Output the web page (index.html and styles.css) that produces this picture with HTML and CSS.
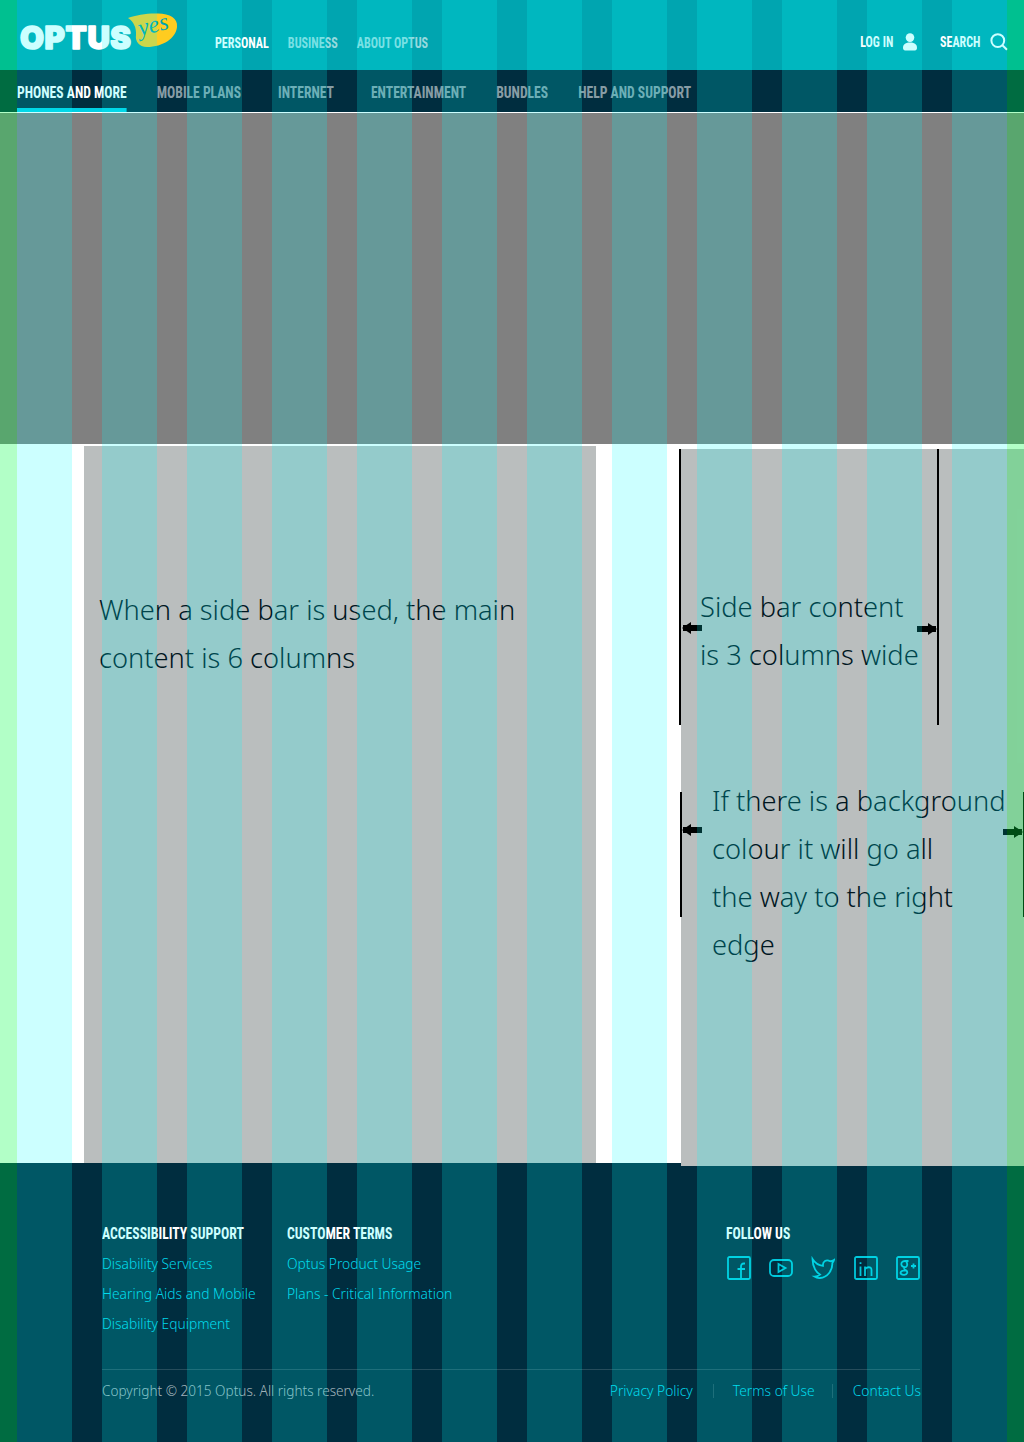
FILE: index.html
```html
<!DOCTYPE html>
<html lang="en">
<head>
  <meta charset="UTF-8">
  <meta name="viewport" content="width=device-width, initial-scale=1.0">
  <title>Optus - two column template</title>
  <link rel="stylesheet" href="styles.css">
</head>
<body>
  <header class="topbar">
    <svg class="logo" width="165" height="44" viewBox="0 0 165 44">
      <path class="logo-bubble" d="M110 8 C118 5 130 3 140 3.5 C152 4 160 8 159 17 C158 28 145 37 129 37 C121 37 117 31 118 25 C118.5 18 116 12 110 8 Z"/>
      <text class="logo-word" x="2" y="39" textLength="111" lengthAdjust="spacing">OPTUS</text>
      <text class="logo-yes" x="122" y="26" transform="rotate(-14 122 26)">yes</text>
    </svg>
    <nav class="segments">
      <a class="segment segment-active" href="#">Personal</a>
      <a class="segment" href="#">Business</a>
      <a class="segment" href="#">About Optus</a>
    </nav>
    <div class="tools">
      <a class="tool tool-login" href="#"><span class="tool-label">Log in</span>
        <svg width="16" height="18" viewBox="0 0 16 18"><circle cx="8" cy="4.6" r="4.3"/><path d="M1 15 C1 11 4 9.6 8 9.6 C12 9.6 15 11 15 15 C15 17 13.5 17.5 12 17.5 L4 17.5 C2.5 17.5 1 17 1 15 Z"/></svg>
      </a>
      <a class="tool" href="#"><span class="tool-label">Search</span>
        <svg width="18" height="18" viewBox="0 0 18 18"><circle class="tool-line" cx="7.8" cy="7.6" r="6.4"/><path class="tool-line" d="M12.4 12.2 L17 16.8"/></svg>
      </a>
    </div>
  </header>

  <nav class="mainnav">
    <div class="mainnav-items">
      <a class="mainnav-item mainnav-active" href="#">Phones and more</a>
      <a class="mainnav-item mainnav-wide" href="#">Mobile plans</a>
      <a class="mainnav-item mainnav-wide" href="#">Internet</a>
      <a class="mainnav-item" href="#">Entertainment</a>
      <a class="mainnav-item" href="#">Bundles</a>
      <a class="mainnav-item" href="#">Help and support</a>
    </div>
  </nav>

  <div class="hero"></div>

  <main class="page">
    <section class="content">
      <p class="copy">When a side bar is used, the main<br>content is 6 columns</p>
    </section>
    <aside class="sidebar">
      <div class="side-block">
        <p class="copy">Side bar content<br>is 3 columns wide</p>
        <span class="arrow arrow-left"></span>
        <span class="arrow arrow-right"></span>
      </div>
      <div class="side-fill">
        <p class="copy">If there is a background<br>colour it will go all<br>the way to the right<br>edge</p>
        <span class="fill-rule"></span>
        <span class="arrow arrow-left"></span>
        <span class="arrow arrow-right"></span>
      </div>
    </aside>
  </main>

  <footer class="footer">
    <div class="footer-top">
      <div class="footer-col footer-col-access">
        <h4>Accessibility support</h4>
        <a href="#">Disability Services</a>
        <a href="#">Hearing Aids and Mobile</a>
        <a href="#">Disability Equipment</a>
      </div>
      <div class="footer-col footer-col-terms">
        <h4>Customer terms</h4>
        <a href="#">Optus Product Usage</a>
        <a href="#">Plans - Critical Information</a>
      </div>
      <div class="footer-col footer-col-follow">
        <h4>Follow us</h4>
        <div class="social">
          <svg width="24" height="24" viewBox="0 0 24 24"><rect x="1" y="1" width="22" height="22" rx="1.5"/><path d="M18 7.5 L17 7.5 C14.8 7.5 14 8.6 14 10.5 L14 23 M10.5 13 L18 13"/></svg>
          <svg width="24" height="24" viewBox="0 0 24 24"><rect x="1" y="4" width="22" height="16" rx="4"/><path d="M9.5 8 L16.5 12 L9.5 16 Z"/></svg>
          <svg width="24" height="24" viewBox="0 0 24 24"><path d="M1.5 3 C4 7 8 9.5 12 9.8 C11.4 5.5 15.5 3 19 5.2 C20.5 5.4 21.5 5 23 4 C22.6 5.4 22 6.2 21.3 7 C21.8 14 16.5 21.5 9 22 C7 22.2 5 21.6 3.5 20.6 C5.5 20.6 7.4 20 9 18.6 C5.5 16.8 1.6 11 1.5 3 Z"/></svg>
          <svg width="24" height="24" viewBox="0 0 24 24"><rect x="1" y="1" width="22" height="22" rx="1.5"/><path d="M6.5 10.5 L6.5 20 M6.5 6.2 L6.5 8 M11 20 L11 10.5 M11 13.5 C12 11 17.5 9.8 17.5 14 L17.5 20"/></svg>
          <svg width="24" height="24" viewBox="0 0 24 24"><rect x="1" y="1" width="22" height="22" rx="1.5"/><path d="M12.5 5 L9 5 C6 5 5 7 5.5 9 C6 11 8.5 11.5 10.2 10.8 C11.6 10 11.6 7 10 5.4 M8.5 12 C7.6 13 8.6 13.6 10 14.4 C12 15.6 11.6 18.6 8.4 18.8 C5.5 19 3.8 17.6 5 15.8 C5.8 14.6 8 14.4 9.6 14.4 M17.5 7.5 L17.5 12.5 M15 10 L20 10"/></svg>
        </div>
      </div>
    </div>
    <div class="footer-bottom">
      <span class="copyright">Copyright © 2015 Optus. All rights reserved.</span>
      <ul class="legal">
        <li><a href="#">Privacy Policy</a></li>
        <li><a href="#">Terms of Use</a></li>
        <li><a href="#">Contact Us</a></li>
      </ul>
    </div>
  </footer>

  <!-- column guide laid over the whole page -->
  <div class="guide">
    <div class="guide-margin"></div>
    <div class="guide-cols">
      <i></i><i></i><i></i><i></i><i></i><i></i><i></i><i></i><i></i><i></i><i></i><i></i>
    </div>
    <div class="guide-margin"></div>
  </div>
</body>
</html>
```

FILE: styles.css
```css
* {
  box-sizing: border-box;
}
body {
  margin: 0;
  position: relative;
  height: 1442px;
  overflow: hidden;
  font-family: "Noto Sans", "Open Sans", sans-serif;
  font-weight: 300;
  background: #fff;
  color: #00161f;
}
a {
  color: inherit;
  text-decoration: none;
}

/* top bar */
.topbar {
  height: 70px;
  background: #00a5b0;
  display: flex;
  position: relative;
}
.logo {
  margin: 10px 0 0 18px;
  overflow: visible;
}
.logo-bubble {
  fill: #ffcc20;
}
.logo-word {
  font-family: "Inter", "Lato", sans-serif;
  font-size: 31px;
  font-weight: 900;
  fill: #fff;
  stroke: #fff;
  stroke-width: 1.6px;
  stroke-linejoin: round;
}
.logo-yes {
  font-family: "Liberation Serif", serif;
  font-style: italic;
  font-size: 24px;
  fill: #00a5b0;
}
.segments {
  display: flex;
  gap: 24.4px;
  margin-left: 32px;
  padding-top: 34px;
  transform: scaleX(0.78);
  transform-origin: 0 0;
}
.segment, .tool-label, .mainnav-item, .footer-col h4 {
  font-family: "Roboto", "Noto Sans", sans-serif;
  font-stretch: 75%;
  font-weight: 700;
  text-transform: uppercase;
  white-space: nowrap;
}
.segment {
  font-size: 15.5px;
  line-height: 18px;
  color: rgba(255, 255, 255, 0.6);
}
.segment-active {
  color: #fff;
}
.tools {
  position: absolute;
  top: 32px;
  right: 16px;
  display: flex;
  gap: 12px;
}
.tool {
  display: flex;
  align-items: center;
  gap: 10px;
  height: 20px;
  color: #fff;
}
.tool-login {
  gap: 8px;
}
.tool-label {
  font-size: 15px;
  transform: scaleX(0.8);
  transform-origin: 100% 50%;
}
.tool svg {
  fill: #fff;
}
.tool .tool-line {
  fill: none;
  stroke: #fff;
  stroke-width: 2;
}

/* main navigation */
.mainnav {
  height: 43px;
  background: #002d3f;
  border-bottom: 1px solid #fff;
  padding-left: 17px;
}
.mainnav-items {
  display: flex;
  gap: 37.5px;
  transform: scaleX(0.8);
  transform-origin: 0 0;
}
.mainnav-item {
  font-size: 17px;
  line-height: 44px;
  height: 42px;
  color: rgba(255, 255, 255, 0.55);
}
.mainnav-wide {
  margin-right: 8.75px;
}
.mainnav-active {
  color: #fff;
  border-bottom: 4px solid #00cfe3;
}

.hero {
  height: 331px;
  background: #808080;
}

/* main body */
.page {
  height: 719px;
  position: relative;
  display: flex;
}
.content {
  width: 512px;
  margin: 2px 0 0 84px;
  padding-top: 140px;
  background: #babebe;
}
.copy {
  margin: 0;
  font-size: 27.25px;
  line-height: 48px;
  white-space: nowrap;
}
.content .copy {
  margin-left: 15px;
}
.sidebar {
  width: 343px;
  height: 717px;
  margin: 5px 0 -3px 85px;
  background: #babebe;
  position: relative;
  z-index: 1;
}
.side-block {
  width: 260px;
  height: 276px;
  margin-left: -2px;
  padding: 134px 0 0 19px;
  border-left: 2px solid #000;
  border-right: 2px solid #000;
  position: relative;
}
.side-fill {
  height: 125px;
  margin: 67px 0 0 -1px;
  padding-left: 30px;
  border-left: 2px solid #000;
  position: relative;
}
.side-fill .copy {
  position: relative;
  top: -15px;
}
.fill-rule {
  position: absolute;
  top: 0;
  right: -1px;
  width: 2px;
  height: 125px;
  background: #000;
}
.arrow {
  position: absolute;
  width: 19px;
  height: 6px;
  background: #000;
}
.arrow::before {
  content: "";
  position: absolute;
  top: -3px;
  border-top: 6px solid transparent;
  border-bottom: 6px solid transparent;
}
.arrow-left::before {
  left: -1px;
  border-right: 9px solid #000;
}
.arrow-right::before {
  right: -1px;
  border-left: 9px solid #000;
}
.side-block .arrow-left {
  top: 176px;
  left: 2px;
}
.side-block .arrow-right {
  top: 177px;
  right: 1px;
}
.side-fill .arrow-left {
  top: 35px;
  left: 1px;
}
.side-fill .arrow-right {
  top: 37px;
  right: 2px;
}

/* footer */
.footer {
  height: 279px;
  background: #002d3f;
  padding: 60px 103px 0 102px;
}
.footer-top {
  display: flex;
  height: 147px;
  margin-right: 1px;
  border-bottom: 1px solid rgba(255, 255, 255, 0.15);
}
.footer-col h4 {
  margin: 0 0 5px;
  font-size: 16px;
  line-height: 21px;
  color: #fff;
  transform: scaleX(0.855);
  transform-origin: 0 0;
}
.footer-col a {
  display: block;
  font-size: 13.8px;
  line-height: 30px;
  color: #00d4e8;
}
.footer-col-access {
  width: 185px;
}
.footer-col-terms {
  width: 439px;
}
.social {
  display: flex;
  gap: 18.3px;
  margin: 12px 0 0 1px;
}
.social svg {
  fill: none;
  stroke: #00c8dc;
  stroke-width: 1.8;
}
.footer-bottom {
  display: flex;
  justify-content: space-between;
  align-items: center;
  margin-top: 9px;
  line-height: 24px;
}
.copyright {
  font-size: 13.6px;
  color: rgba(255, 255, 255, 0.65);
}
.legal {
  display: flex;
  align-items: center;
  margin: 0;
  padding: 0;
  list-style: none;
}
.legal li {
  padding: 0 20px 0 19px;
  font-size: 13.8px;
  line-height: 14px;
  border-left: 1px solid rgba(255, 255, 255, 0.15);
  color: #00d4e8;
}
.legal li:first-child {
  border-left: none;
}
.legal li:nth-child(2) {
  padding-right: 17px;
}
.legal li:last-child {
  padding: 0 0 0 20px;
}

/* column guide */
.guide {
  position: absolute;
  top: 0;
  left: 0;
  width: 1024px;
  height: 1442px;
  display: flex;
  pointer-events: none;
  z-index: 5;
}
.guide-margin {
  width: 17px;
  background: rgba(0, 255, 70, 0.3);
}
.guide-cols {
  flex: 1;
  display: flex;
  justify-content: space-between;
}
.guide-cols i {
  width: 55px;
  background: rgba(0, 255, 255, 0.2);
}
```
